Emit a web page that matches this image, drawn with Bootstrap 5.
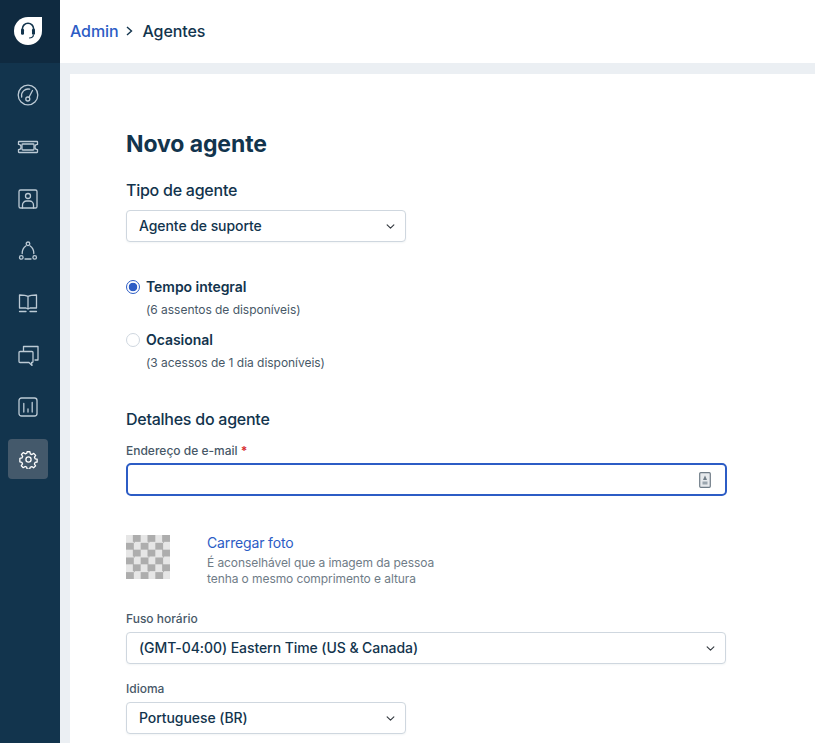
<!DOCTYPE html>
<html lang="pt-BR">

<head>
  <meta charset="UTF-8">
  <meta name="viewport" content="width=device-width, initial-scale=1.0">
  <title>Novo agente</title>
  <link href="https://cdn.jsdelivr.net/npm/bootstrap@5.3.0/dist/css/bootstrap.min.css" rel="stylesheet">
  <style>
    html, body { height: 743px; overflow: hidden; }
    body { font-family: Inter, "Liberation Sans", sans-serif; color: #12344d; background: #ebeff3; }

    /* sidebar */
    .side-rail { width: 60px; background: #12344d; }
    .side-logo { height: 63px; background: #0f2a40; padding: 0 4px 2px 0; }
    .side-list { padding: 12px 0 0 8px; }
    .side-item { width: 40px; height: 40px; margin-bottom: 12px; border-radius: 4px; color: #bccad5; }
    .side-item.active { background: #44596b; color: #fff; }
    .side-item svg { width: 22px; height: 22px; fill: none; stroke: currentColor; stroke-width: 1.3; stroke-linecap: round; stroke-linejoin: round; }
    .side-item svg.gear-icon { width: 19px; height: 19px; stroke-width: 1.5; }

    /* top bar */
    .top-bar { height: 63px; padding: 0 0 2px 10px; font-size: 16px; font-weight: 500; letter-spacing: -.1px; }
    .top-bar a { color: #2c5cc5; text-decoration: none; }
    .top-bar svg { margin: 0 9px 0 8px; }

    .page-sheet { margin: 11px 0 0 10px; padding: 56px 0 0 56px; }
    .page-title { font-size: 23px; line-height: 28px; font-weight: 700; letter-spacing: -.1px; margin-bottom: 22px; }
    .section-title { font-size: 16px; line-height: 20px; font-weight: 500; letter-spacing: -.25px; color: #12344d; }
    .title-kind { margin-bottom: 10px; }
    .title-details { margin-bottom: 13px; }

    .agent-select { height: 32px; font-size: 14px; font-weight: 500; letter-spacing: -.07px; color: #12344d; padding: 0 28px 2px 12px; border-color: #cfd7df; border-radius: 4px; background-size: 11px 9px; background-position: right 9px center; box-shadow: 0 1px 2px rgba(18, 52, 77, .05); }
    .w-short { width: 280px; }
    .w-long { width: 600px; }
    .kind-select { margin-bottom: 35px; }

    .radio-row { margin-bottom: 11px; padding-left: 20px; min-height: 0; }
    .radio-row.last-radio { margin-bottom: 37px; }
    .radio-row .form-check-input { width: 14px; height: 14px; margin-left: -20px; margin-top: 3px; border-color: #cfd7df; }
    .radio-row .form-check-input:checked { background: radial-gradient(circle, #2c5cc5 0 4px, #fff 4.6px); border-color: #2c5cc5; }
    .radio-name { font-size: 14px; line-height: 20px; font-weight: 600; letter-spacing: -.05px; display: block; }
    .radio-hint { font-size: 12px; line-height: 18px; letter-spacing: -.03px; color: #475867; margin-top: 4px; }

    .field-label { font-size: 12px; line-height: 18px; font-weight: 500; color: #475867; margin-bottom: 3px; display: block; }
    .field-label.select-label { margin-bottom: 4px; }
    .field-label b { color: #d72d30; }
    .email-wrap { width: 601px; margin-bottom: 39px; }
    .email-input { height: 33px; border: 2px solid #2c5cc5; border-radius: 5px; padding-right: 36px; }
    .email-input:focus { border-color: #2c5cc5; box-shadow: none; }
    .email-icon { top: 9px; right: 16px; }

    .photo-row { margin-bottom: 23px; }
    .photo-blank { width: 44px; height: 44px; background: repeating-conic-gradient(#adadad 0 25%, #e6e6e6 0 50%) 0 0 / 14.67px 14.67px; }
    .photo-copy { margin-left: 37px; }
    .photo-link { font-size: 14px; line-height: 16px; letter-spacing: -.15px; color: #2c5cc5; text-decoration: none; display: block; }
    .photo-hint { font-size: 12px; line-height: 16px; letter-spacing: -.08px; color: #6f7c87; margin-top: 4px; }
    .zone-select { margin-bottom: 16px; }
  </style>
</head>

<body class="d-flex">
  <nav class="side-rail flex-shrink-0">
    <div class="side-logo d-flex align-items-center justify-content-center">
      <svg width="28" height="28" viewBox="1 1 26 26">
        <path d="M14 1h13v13a13 13 0 0 1-13 13A13 13 0 0 1 1 14 13 13 0 0 1 14 1z" fill="#fff"/>
        <path d="M8.800 14v-2a5.200 5.200 0 0 1 10.400 0v2" fill="none" stroke="#12344d" stroke-width="1.500"/>
        <rect x="7.500" y="12" width="2.800" height="5.500" rx="1.200" fill="#12344d"/>
        <rect x="17.700" y="12" width="2.800" height="5.500" rx="1.200" fill="#12344d"/>
        <path d="M19 17.500c0 2-2 3-4 3" fill="none" stroke="#12344d" stroke-width="1.100"/>
      </svg>
    </div>
    <div class="side-list d-flex flex-column">
      <a class="side-item d-flex align-items-center justify-content-center">
        <svg viewBox="0 0 22 22"><circle cx="11" cy="11" r="9.800"/><path d="M4.700 13a6.600 6.600 0 0 1 8-7.800M15.500 6.500l-3.500 6.800"/><circle cx="10.800" cy="15" r="2"/></svg>
      </a>
      <a class="side-item d-flex align-items-center justify-content-center">
        <svg viewBox="0 0 22 22"><path d="M2 5.500h18a.5.5 0 0 1 .5.5v2.400a2.600 2.600 0 0 0 0 5.200V16a.5.5 0 0 1-.5.5H2a.5.5 0 0 1-.5-.5v-2.400a2.600 2.600 0 0 0 0-5.200V6a.5.5 0 0 1 .5-.5z"/><rect x="5" y="8" width="12" height="6" rx=".8"/></svg>
      </a>
      <a class="side-item d-flex align-items-center justify-content-center">
        <svg viewBox="0 0 22 22"><rect x="2" y="2" width="18" height="18" rx="1.600"/><circle cx="11" cy="8" r="2.500"/><path d="M5.500 20v-3a4 4 0 0 1 4-4h3a4 4 0 0 1 4 4v3"/></svg>
      </a>
      <a class="side-item d-flex align-items-center justify-content-center">
        <svg viewBox="0 0 22 22"><circle cx="11" cy="3.800" r="1.800"/><circle cx="4.300" cy="17.400" r="1.800"/><circle cx="17.700" cy="17.400" r="1.800"/><path d="M8.800 6a9 9 0 0 0-3.600 7.500M13.200 6a9 9 0 0 1 3.600 7.500M8 19h6"/></svg>
      </a>
      <a class="side-item d-flex align-items-center justify-content-center">
        <svg viewBox="0 0 22 22"><path d="M11 4.500C9.500 3.500 6 3 2.500 3v13H9l2 1 2-1h6.500V3c-3.500 0-7 .5-8.500 1.500zM11 4.500V17M2.500 19.500H9M13 19.500h6.500"/></svg>
      </a>
      <a class="side-item d-flex align-items-center justify-content-center">
        <svg viewBox="0 0 22 22"><path d="M6.500 7V2.500H21v13.500h-3"/><path d="M3 7.500h12a1 1 0 0 1 1 1V17.500a1 1 0 0 1-1 1h-.5l.5 3-3-3H3a1 1 0 0 1-1-1V8.500a1 1 0 0 1 1-1z"/></svg>
      </a>
      <a class="side-item d-flex align-items-center justify-content-center">
        <svg viewBox="0 0 22 22"><rect x="2" y="2" width="18" height="18" rx="2.500"/><path d="M6.800 7.500V16M11 13v3M15.200 6.500V16"/></svg>
      </a>
      <a class="side-item active d-flex align-items-center justify-content-center">
        <svg class="gear-icon" viewBox="0 0 22 22"><circle cx="11" cy="11" r="3"/><path d="M9.400 2h3.200l.5 2.500 1.800.8 2.200-1.400 2.200 2.300-1.400 2.100.8 1.900 2.300.5v3.200l-2.400.5-.8 1.800 1.400 2.200-2.300 2.200-2.100-1.400-1.900.8-.5 2.300H9.400l-.5-2.400-1.800-.8-2.200 1.400-2.200-2.300 1.400-2.100-.8-1.900-2.300-.5V9.700l2.400-.5.800-1.800-1.400-2.200 2.300-2.200 2.100 1.400 1.900-.8z"/></svg>
      </a>
    </div>
  </nav>

  <div class="flex-grow-1 d-flex flex-column">
    <header class="top-bar bg-white d-flex align-items-center">
      <a href="#">Admin</a>
      <svg width="7" height="10" viewBox="0 0 7 10"><path d="M1 1l4.500 4L1 9" fill="none" stroke="#12344d" stroke-width="1.400"/></svg>
      <span>Agentes</span>
    </header>

    <main class="page-sheet bg-white flex-grow-1">
      <h1 class="page-title">Novo agente</h1>

      <div class="section-title title-kind">Tipo de agente</div>
      <select class="form-select agent-select w-short kind-select">
        <option>Agente de suporte</option>
      </select>

      <div class="form-check radio-row">
        <input class="form-check-input" type="radio" name="agentKind" id="kindFull" checked>
        <label class="radio-name" for="kindFull">Tempo integral</label>
        <div class="radio-hint">(6 assentos de disponíveis)</div>
      </div>
      <div class="form-check radio-row last-radio">
        <input class="form-check-input" type="radio" name="agentKind" id="kindOcc">
        <label class="radio-name" for="kindOcc">Ocasional</label>
        <div class="radio-hint">(3 acessos de 1 dia disponíveis)</div>
      </div>

      <div class="section-title title-details">Detalhes do agente</div>
      <label class="field-label" for="agentEmail">Endereço de e-mail <b>*</b></label>
      <div class="email-wrap position-relative">
        <input class="form-control email-input" type="text" id="agentEmail">
        <svg class="email-icon position-absolute" width="12" height="16" viewBox="0 0 12 16">
          <rect x=".7" y=".7" width="10.600" height="14.600" rx="1" fill="#e6e9ec" stroke="#6f7c87" stroke-width="1.200"/>
          <path d="M6 3.500L8 8H4z" fill="#6f7c87"/>
          <rect x="3.500" y="9.500" width="5" height="3" fill="#9aa5ae"/>
        </svg>
      </div>

      <div class="photo-row d-flex">
        <div class="photo-blank flex-shrink-0"></div>
        <div class="photo-copy">
          <a class="photo-link" href="#">Carregar foto</a>
          <div class="photo-hint">É aconselhável que a imagem da pessoa<br>tenha o mesmo comprimento e altura</div>
        </div>
      </div>

      <label class="field-label select-label" for="agentZone">Fuso horário</label>
      <select class="form-select agent-select w-long zone-select" id="agentZone">
        <option>(GMT-04:00) Eastern Time (US &amp; Canada)</option>
      </select>

      <label class="field-label select-label" for="agentLang">Idioma</label>
      <select class="form-select agent-select w-short" id="agentLang">
        <option>Portuguese (BR)</option>
      </select>
    </main>
  </div>

  <script src="https://cdn.jsdelivr.net/npm/bootstrap@5.3.0/dist/js/bootstrap.bundle.min.js"></script>
</body>

</html>
